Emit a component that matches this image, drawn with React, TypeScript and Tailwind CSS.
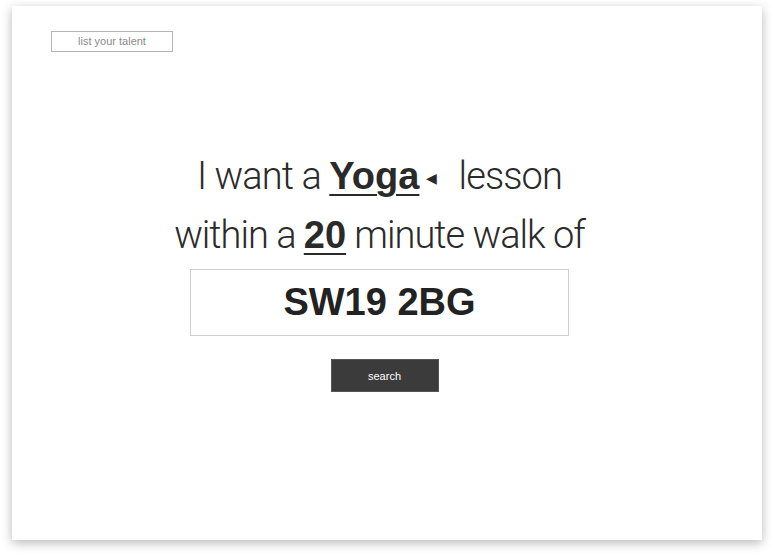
export default function App() {
  const light = { fontFamily: "Roboto, 'Liberation Sans', sans-serif" };
  const bold = { fontFamily: "'Liberation Sans', Arial, sans-serif" };
  return (
    <div className="h-[558px] w-[774px] bg-white pl-[12px] pt-[6px]">
      <div
        className="flex h-[534px] w-[750px] flex-col bg-white shadow-[0_3px_10px_rgba(0,0,0,0.28)]"
        style={bold}
      >
        <div className="pl-[39px] pt-[25px]">
          <button className="flex h-[21px] w-[122px] items-center justify-center border border-[#b5b5b5] text-[11px] text-[#8a8a8a]">
            list your talent
          </button>
        </div>

        <div className="flex flex-col items-center pr-[15px] pt-[96px]">
          <div className="text-[38px] font-light leading-[57px] tracking-[-0.9px] text-[#2a2a2a]" style={light}>
            I want a{" "}
            <span
              className="font-bold tracking-normal underline decoration-[1.5px] underline-offset-[5px]"
              style={bold}
            >
              Yoga
            </span>
            <span className="ml-[7px] mr-[22px] inline-block align-middle text-[14px]">◀</span>
            lesson
          </div>
          <div className="text-[38px] font-light leading-[57px] tracking-[-1px] text-[#2a2a2a]" style={light}>
            within a{" "}
            <span
              className="font-bold tracking-normal underline decoration-[1.5px] underline-offset-[5px]"
              style={bold}
            >
              20
            </span>{" "}
            minute walk of
          </div>

          <div className="mt-[5px] flex h-[67px] w-[379px] items-center justify-center border border-[#cfcfcf] text-[38px] font-bold text-[#222]">
            SW19 2BG
          </div>

          <button className="ml-[10px] mt-[23px] flex h-[33px] w-[108px] items-center justify-center border border-[#555] bg-[#3b3b3b] text-[11px] text-white">
            search
          </button>
        </div>
      </div>
    </div>
  );
}
